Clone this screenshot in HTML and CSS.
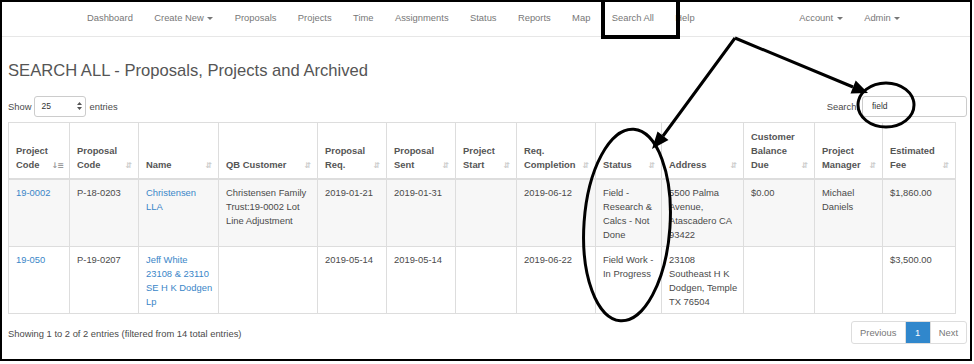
FILE: index.html
```html
<!DOCTYPE html>
<html lang="en">
<head>
    <meta charset="UTF-8">
    <title>Search All</title>
    <link rel="stylesheet" href="styles.css">
</head>
<body>
    <div class="shot">
        <nav class="navbar">
            <ul class="nav">
                <li><a href="#">Dashboard</a></li>
                <li><a href="#">Create New <span class="caret"></span></a></li>
                <li><a href="#">Proposals</a></li>
                <li><a href="#">Projects</a></li>
                <li><a href="#">Time</a></li>
                <li><a href="#">Assignments</a></li>
                <li><a href="#">Status</a></li>
                <li><a href="#">Reports</a></li>
                <li><a href="#">Map</a></li>
                <li><a href="#">Search All</a></li>
                <li><a href="#">Help</a></li>
            </ul>
            <ul class="nav nav-right">
                <li><a href="#">Account <span class="caret"></span></a></li>
                <li><a href="#">Admin <span class="caret"></span></a></li>
            </ul>
        </nav>

        <div class="container">
            <h1 class="page-title">SEARCH ALL - Proposals, Projects and Archived</h1>

            <div class="dt-top">
                <div class="dt-length">
                    Show
                    <span class="select">25
                        <svg width="5" height="8" viewBox="0 0 5 8"><path d="M0 3L2.5 0L5 3ZM0 5L2.5 8L5 5Z" fill="#555"/></svg>
                    </span>
                    entries
                </div>
                <div class="dt-search">
                    Search:
                    <input type="search" value="field">
                </div>
            </div>

            <table class="results">
                <thead>
                    <tr>
                        <th class="col-code sorted">Project Code</th>
                        <th class="col-prop">Proposal Code</th>
                        <th class="col-name">Name</th>
                        <th class="col-qb">QB Customer</th>
                        <th class="col-req">Proposal Req.</th>
                        <th class="col-sent">Proposal Sent</th>
                        <th class="col-start">Project Start</th>
                        <th class="col-comp">Req. Completion</th>
                        <th class="col-status">Status</th>
                        <th class="col-addr">Address</th>
                        <th class="col-bal">Customer Balance Due</th>
                        <th class="col-pm">Project Manager</th>
                        <th class="col-fee">Estimated Fee</th>
                    </tr>
                </thead>
                <tbody>
                    <tr class="odd">
                        <td><a href="#">19-0002</a></td>
                        <td>P-18-0203</td>
                        <td><a href="#">Christensen LLA</a></td>
                        <td>Christensen Family Trust:19-0002 Lot Line Adjustment</td>
                        <td>2019-01-21</td>
                        <td>2019-01-31</td>
                        <td></td>
                        <td>2019-06-12</td>
                        <td>Field - Research &amp; Calcs - Not Done</td>
                        <td>5500 Palma Avenue, Atascadero CA 93422</td>
                        <td>$0.00</td>
                        <td>Michael Daniels</td>
                        <td>$1,860.00</td>
                    </tr>
                    <tr>
                        <td><a href="#">19-050</a></td>
                        <td>P-19-0207</td>
                        <td><a href="#">Jeff White 23108 &amp; 23110 SE H K Dodgen Lp</a></td>
                        <td></td>
                        <td>2019-05-14</td>
                        <td>2019-05-14</td>
                        <td></td>
                        <td>2019-06-22</td>
                        <td>Field Work - In Progress</td>
                        <td>23108 Southeast H K Dodgen, Temple TX 76504</td>
                        <td></td>
                        <td></td>
                        <td>$3,500.00</td>
                    </tr>
                </tbody>
            </table>

            <div class="dt-bottom">
                <div class="dt-info">Showing 1 to 2 of 2 entries (filtered from 14 total entries)</div>
                <ul class="pagination">
                    <li class="disabled"><a href="#">Previous</a></li>
                    <li class="active"><a href="#">1</a></li>
                    <li class="disabled"><a href="#">Next</a></li>
                </ul>
            </div>
        </div>
    </div>

    <!-- hand drawn markup on top of the screenshot -->
    <svg class="marks" width="974" height="364" viewBox="0 0 974 364">
        <g fill="none" stroke="#000" stroke-width="3">
            <rect x="603" y="-2" width="75" height="39" stroke-width="4"/>
            <path d="M735 38L853 87M735 38L663 136"/>
            <ellipse cx="886" cy="105" rx="28" ry="22"/>
            <ellipse cx="627" cy="225" rx="43" ry="96" transform="rotate(4 627 225)"/>
        </g>
        <path d="M868 93L850.5 93.5L855.7 80.5ZM652 149L668.5 140L657.5 131.5Z"/>
    </svg>
</body>
</html>
```

FILE: styles.css
```css
* {
    box-sizing: border-box;
}

body {
    margin: 0;
    background: #fff;
    font-family: "Liberation Sans", Arial, sans-serif;
    font-size: 9.4px;
    color: #4a4a4a;
}

a {
    color: #3a86c8;
    text-decoration: none;
}

.shot {
    width: 972px;
    height: 361px;
    border: 2px solid #000;
}

/* top menu */
.navbar {
    display: flex;
    align-items: center;
    height: 35px;
    padding-bottom: 2px;
    border-bottom: 1px solid #e7e7e7;
}

.nav {
    display: flex;
    list-style: none;
    margin: 0 0 0 74.3px;
    padding: 0;
}

.nav a {
    display: block;
    padding: 0 10.7px;
    line-height: 14px;
    color: #777;
}

.nav-right {
    margin-left: auto;
    margin-right: 59px;
}

.caret {
    display: inline-block;
    width: 0;
    height: 0;
    margin-left: 1px;
    vertical-align: middle;
    border-top: 3px solid #777;
    border-left: 3px solid transparent;
    border-right: 3px solid transparent;
}

/* page */
.container {
    padding: 0 3px 0 6px;
}

.page-title {
    margin: 24.3px 0 14.7px;
    font-size: 16.6px;
    line-height: 20px;
    font-weight: normal;
    color: #555;
}

.dt-top {
    display: flex;
    justify-content: space-between;
    align-items: center;
    height: 21px;
}

.dt-length,
.dt-search {
    display: flex;
    align-items: center;
    gap: 3px;
}

.select {
    display: flex;
    align-items: center;
    justify-content: space-between;
    width: 52px;
    height: 21px;
    padding: 0 3px 0 6px;
    border: 1px solid #ccc;
    border-radius: 3px;
    font-size: 8.5px;
    color: #333;
}

.dt-search input {
    width: 105px;
    height: 21px;
    margin: 0;
    padding: 0 9px;
    border: 1px solid #ccc;
    border-radius: 3px;
    font-family: "Liberation Sans", Arial, sans-serif;
    font-size: 8.5px;
    color: #333;
    outline: none;
}

/* table */
.results {
    width: 947px;
    margin-top: 5px;
    table-layout: fixed;
    border-collapse: collapse;
    border: 1px solid #ddd;
}

.results th,
.results td {
    border: 1px solid #ddd;
    line-height: 14px;
    text-align: left;
}

.results th {
    position: relative;
    padding: 7px 16px 6px 7px;
    vertical-align: bottom;
    font-weight: bold;
    color: #555;
    border-bottom-width: 2px;
}

.results th::after {
    content: "\21F5";
    position: absolute;
    right: 6px;
    bottom: 8px;
    font-family: "DejaVu Sans", sans-serif;
    font-size: 8px;
    line-height: 1;
    color: #ccc;
}

.results th.sorted::after {
    content: "\2193\2261";
    letter-spacing: -1px;
    color: #999;
}

.results td {
    padding: 6px 4px 4px 7px;
    vertical-align: top;
}

.results .odd td {
    background: #f7f7f7;
}

.col-code { width: 61px; }
.col-prop { width: 69px; }
.col-name { width: 80px; }
.col-qb { width: 99px; }
.col-req { width: 69px; }
.col-sent { width: 69px; }
.col-start { width: 61px; }
.col-comp { width: 79px; }
.col-status { width: 66px; }
.col-addr { width: 82px; }
.col-bal { width: 71px; }
.col-pm { width: 68px; }
.col-fee { width: 73px; }

/* footer of the table */
.dt-bottom {
    display: flex;
    justify-content: space-between;
    align-items: center;
    margin-top: 7px;
}

.dt-info {
    padding-top: 2px;
}

.pagination {
    display: flex;
    list-style: none;
    margin: 0;
    padding: 0;
    border: 1px solid #ddd;
    border-radius: 3px;
}

.pagination li + li {
    border-left: 1px solid #ddd;
}

.pagination a {
    display: block;
    padding: 0 8px;
    line-height: 21px;
    color: #777;
}

.pagination .active a {
    padding: 0 9.5px;
    background: #3087cc;
    color: #fff;
}

.marks {
    position: absolute;
    top: 0;
    left: 0;
}
```
